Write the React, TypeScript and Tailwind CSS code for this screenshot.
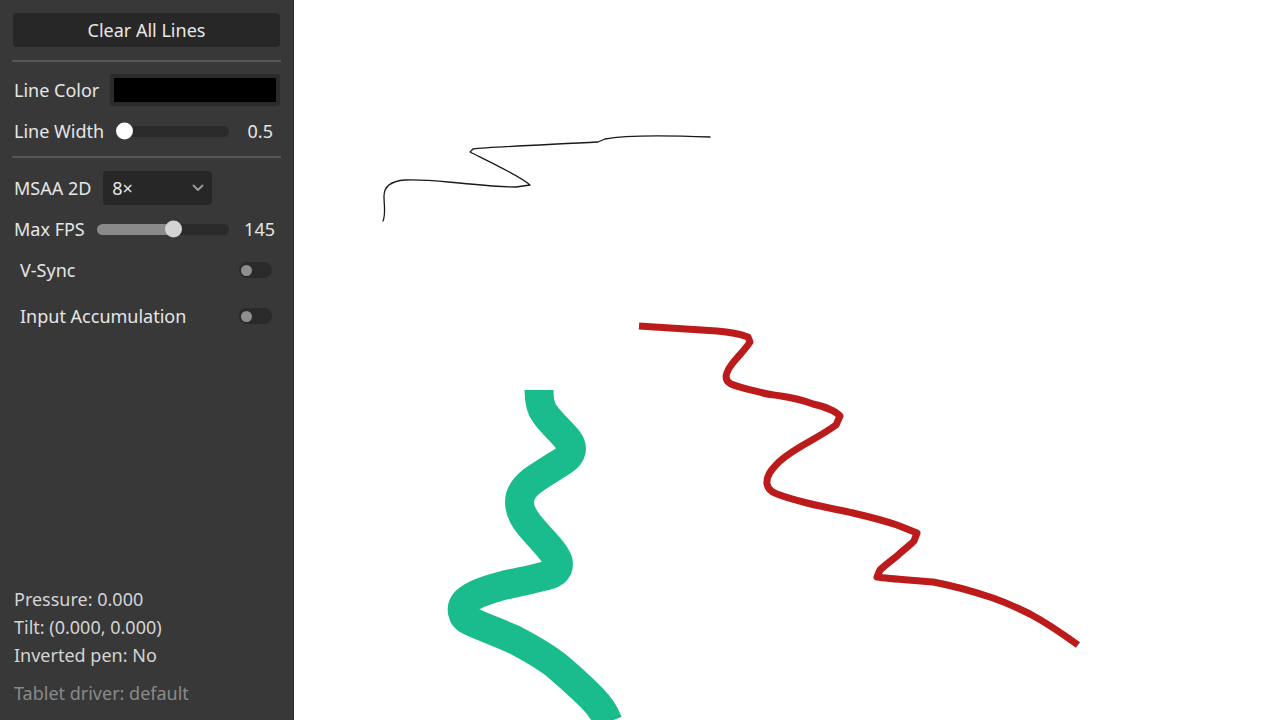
import React from "react";

function Toggle() {
  return (
    <div className="w-[33px] h-[16px] rounded-full bg-[#2a2a2a] flex items-center pl-[2px]">
      <div className="w-[11px] h-[11px] rounded-full bg-[#8e8e8e]" />
    </div>
  );
}

export default function App() {
  return (
    <div
      className="w-[1280px] h-[720px] flex bg-white overflow-hidden"
      style={{ fontFamily: '"Noto Sans", "Open Sans", sans-serif' }}
    >
      <div className="w-[294px] h-full bg-[#383838] border-r border-[#2c2c2c] flex flex-col px-[13px] pt-[13px] pb-[13px] text-[18px] text-[#e6e6e6]">
        <button className="h-[34px] w-full rounded-[4px] bg-[#272727] text-[#e8e8e8] flex items-center justify-center">
          Clear All Lines
        </button>
        <div className="h-[2px] bg-[#565656] mt-[13px] -mx-[1px]" />
        <div className="flex items-center mt-[12px] h-[32px]">
          <span className="pl-[1px]">Line Color</span>
          <div className="ml-[11px] flex-1 h-[32px] rounded-[3px] bg-[#2b2b2b] p-[4px]">
            <div className="w-full h-full bg-black" />
          </div>
        </div>
        <div className="flex items-center mt-[14px] h-[22px]">
          <span className="pl-[1px]">Line Width</span>
          <div className="ml-[12px] flex-1 relative h-[11px] rounded-full bg-[#2a2a2a]">
            <div className="absolute left-0 top-1/2 -translate-y-1/2 w-[17px] h-[17px] rounded-full bg-white" />
          </div>
          <span className="w-[44px] text-right pr-[0px]">0.5</span>
          <span className="w-[7px]" />
        </div>
        <div className="h-[2px] bg-[#565656] mt-[14px] -mx-[1px]" />
        <div className="flex items-center mt-[13px] h-[34px]">
          <span className="pl-[1px]">MSAA 2D</span>
          <div className="ml-[12px] w-[109px] h-[34px] rounded-[4px] bg-[#272727] flex items-center justify-between pl-[9px] pr-[8px]">
            <span>8×</span>
            <svg width="12" height="8" viewBox="0 0 12 8" fill="none">
              <path d="M1.5 1.5 L6 6 L10.5 1.5" stroke="#9a9a9a" strokeWidth="1.8" strokeLinecap="round" strokeLinejoin="round" />
            </svg>
          </div>
        </div>
        <div className="flex items-center mt-[13px] h-[22px]">
          <span className="pl-[1px]">Max FPS</span>
          <div className="ml-[12px] flex-1 relative h-[11px] rounded-full bg-[#2a2a2a]">
            <div className="absolute left-0 top-0 h-full w-[80px] rounded-full bg-[#8a8a8a]" />
            <div className="absolute left-[68px] top-1/2 -translate-y-1/2 w-[17px] h-[17px] rounded-full bg-[#d4d4d4]" />
          </div>
          <span className="w-[46px] text-right">145</span>
          <span className="w-[5px]" />
        </div>
        <div className="flex items-center justify-between mt-[18px] h-[24px] pl-[7px] pr-[8px]">
          <span>V-Sync</span>
          <Toggle />
        </div>
        <div className="flex items-center justify-between mt-[22px] h-[24px] pl-[7px] pr-[8px]">
          <span>Input Accumulation</span>
          <Toggle />
        </div>
        <div className="mt-auto flex flex-col pl-[1px] text-[#d4d4d4]">
          <div className="h-[28px] flex items-center">Pressure: 0.000</div>
          <div className="h-[28px] flex items-center">Tilt: (0.000, 0.000)</div>
          <div className="h-[28px] flex items-center">Inverted pen: No</div>
          <div className="h-[28px] flex items-center mt-[10px] text-[#8a8a8a]">Tablet driver: default</div>
        </div>
      </div>
      <div className="flex-1 h-full relative bg-white">
        <svg className="absolute inset-0" width="986" height="720" viewBox="294 0 986 720">
          <path
            d="M383 221 C386 214 384 206 384 196 C384 186 392 181 405 180 C425 179 445 182 470 184 C490 186 505 187 516 187 L530 185 C520 176 490 162 470 152 L473 149 C490 147 540 145 598 142 L605 139 C625 135 660 135 710 137"
            fill="none"
            stroke="#1a1a1a"
            strokeWidth="1.3"
            strokeLinecap="round"
            strokeLinejoin="round"
          />
          <path
            d="M639 326 L717 331 C730 332 740 334 748 337 L750 342 C745 350 738 356 732 364 C726 372 723 380 731 384 C740 388 752 390 763 393 C770 395 776 395 781 396 C795 398 805 401 813 404 C825 407 835 410 840 416 L836 425 C825 433 812 440 800 447 C790 453 782 458 776 465 C770 471 766 477 767 484 C768 489 771 492 777 494 C785 497 795 500 807 503 C822 507 840 510 853 513 C870 517 885 521 897 525 L917 533 L914 541 C908 547 902 551 897 556 C891 561 885 565 880 570 L877 577 C890 579 910 580 933 582 C955 586 975 592 993 598 C1010 604 1020 609 1030 614 C1045 622 1060 632 1078 645"
            fill="none"
            stroke="#bc1b1b"
            strokeWidth="7"
            strokeLinecap="butt"
            strokeLinejoin="round"
          />
          <path
            d="M539 390 C539 400 540 408 545 414 C552 424 562 432 568 440 C574 448 572 455 563 461 C552 468 542 474 532 481 C522 489 518 497 520 507 C522 518 530 526 538 535 C547 545 555 553 558 561 C560 570 554 574 545 576 C530 580 518 582 505 585 C490 589 475 593 466 601 C460 607 461 617 470 621 C485 628 500 633 515 640 C530 648 545 656 557 666 C570 677 582 688 592 698 C598 704 604 711 608 722"
            fill="none"
            stroke="#1abc8d"
            strokeWidth="29"
            strokeLinecap="butt"
            strokeLinejoin="round"
          />
        </svg>
      </div>
    </div>
  );
}
